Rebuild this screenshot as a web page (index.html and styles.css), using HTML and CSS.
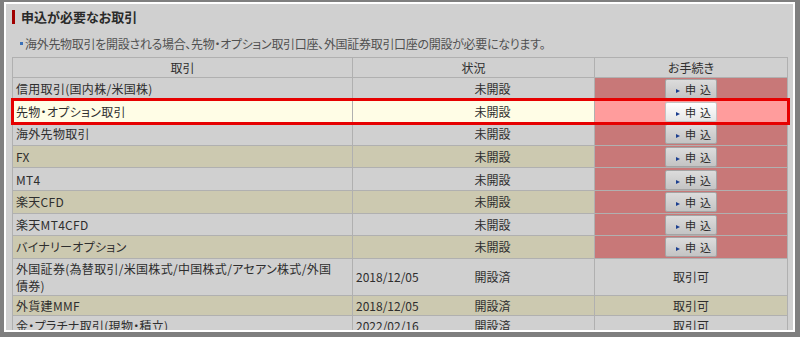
FILE: index.html
```html
<!DOCTYPE html>
<html lang="ja">

<head>
    <meta charset="UTF-8">
    <meta name="viewport" content="width=device-width, initial-scale=1.0">
    <title>申込が必要なお取引</title>
    <link rel="stylesheet" href="styles.css">
</head>

<body>
    <div class="screen">
        <div class="panel">
            <h2 class="ttl">申込が必要なお取引</h2>
            <p class="note">海外先物取引を開設される場合、先物・オプション取引口座、外国証券取引口座の開設が必要になります。</p>
            <table class="acct">
                <colgroup>
                    <col class="c-name">
                    <col class="c-date">
                    <col class="c-stat">
                    <col class="c-act">
                </colgroup>
                <tr>
                    <th>取引</th>
                    <th colspan="2">状況</th>
                    <th>お手続き</th>
                </tr>
                <tr class="apply">
                    <td>信用取引(国内株/米国株)</td>
                    <td class="date"></td>
                    <td class="stat">未開設</td>
                    <td class="act"><a class="btn" href="javascript:;">申込</a></td>
                </tr>
                <tr class="apply focus">
                    <td>先物・オプション取引</td>
                    <td class="date"></td>
                    <td class="stat">未開設</td>
                    <td class="act"><a class="btn" href="javascript:;">申込</a></td>
                </tr>
                <tr class="apply">
                    <td>海外先物取引</td>
                    <td class="date"></td>
                    <td class="stat">未開設</td>
                    <td class="act"><a class="btn" href="javascript:;">申込</a></td>
                </tr>
                <tr class="apply even">
                    <td>FX</td>
                    <td class="date"></td>
                    <td class="stat">未開設</td>
                    <td class="act"><a class="btn" href="javascript:;">申込</a></td>
                </tr>
                <tr class="apply">
                    <td>MT4</td>
                    <td class="date"></td>
                    <td class="stat">未開設</td>
                    <td class="act"><a class="btn" href="javascript:;">申込</a></td>
                </tr>
                <tr class="apply even">
                    <td>楽天CFD</td>
                    <td class="date"></td>
                    <td class="stat">未開設</td>
                    <td class="act"><a class="btn" href="javascript:;">申込</a></td>
                </tr>
                <tr class="apply">
                    <td>楽天MT4CFD</td>
                    <td class="date"></td>
                    <td class="stat">未開設</td>
                    <td class="act"><a class="btn" href="javascript:;">申込</a></td>
                </tr>
                <tr class="apply even">
                    <td>バイナリーオプション</td>
                    <td class="date"></td>
                    <td class="stat">未開設</td>
                    <td class="act"><a class="btn" href="javascript:;">申込</a></td>
                </tr>
                <tr>
                    <td>外国証券(為替取引/米国株式/中国株式/アセアン株式/外国債券)</td>
                    <td class="date">2018/12/05</td>
                    <td class="stat">開設済</td>
                    <td class="ok">取引可</td>
                </tr>
                <tr class="even">
                    <td>外貨建MMF</td>
                    <td class="date">2018/12/05</td>
                    <td class="stat">開設済</td>
                    <td class="ok">取引可</td>
                </tr>
                <tr>
                    <td>金・プラチナ取引(現物・積立)</td>
                    <td class="date">2022/02/16</td>
                    <td class="stat">開設済</td>
                    <td class="ok">取引可</td>
                </tr>
            </table>
        </div>
    </div>
</body>

</html>
```

FILE: styles.css
```css
* {
    box-sizing: border-box;
}
body {
    margin: 0;
    background: #7f7f7f;
    font-family: "Noto Sans CJK JP", "Liberation Sans", sans-serif;
    font-feature-settings: "palt";
    color: #2e2e2e;
}
.screen {
    padding: 2px 5px 5px 4px;
    height: 337px;
}
.panel {
    height: 330px;
    border: 2px solid #fff;
    background: #d0d0d0;
    padding: 6px 5px 0 6px;
    overflow: hidden;
}
.ttl {
    margin: 0;
    height: 14px;
    line-height: 14px;
    font-size: 13px;
    font-weight: bold;
    color: #2a2a2a;
    border-left: 3px solid #a00000;
    padding-left: 6px;
}
.note {
    margin: 13px 0 0;
    height: 14px;
    line-height: 14px;
    font-size: 12px;
    letter-spacing: -0.3px;
    color: #505050;
    padding-left: 13px;
    position: relative;
}
.note::before {
    content: "";
    position: absolute;
    left: 8px;
    top: 5px;
    width: 3px;
    height: 3px;
    background: #3a70b8;
}
.acct {
    margin-top: 6px;
    width: 776px;
    border-collapse: collapse;
    table-layout: fixed;
    font-size: 12px;
}
.c-name {
    width: 340px;
}
.c-date {
    width: 119px;
}
.c-stat {
    width: 123px;
}
.acct th,
.acct td {
    border: 1px solid #b0b0b0;
    padding: 1px 3px;
    line-height: 17px;
    font-weight: normal;
    text-align: left;
    vertical-align: middle;
}
.acct td:first-child {
    letter-spacing: 0.3px;
    padding-right: 18px;
}
.acct th {
    text-align: center;
}
.acct td.date {
    border-right: none;
}
.acct td.stat {
    border-left: none;
}
.acct td.act,
.acct td.ok {
    text-align: center;
}
.acct tr.even td {
    background: #ccc9b0;
}
.acct tr.apply td {
    height: 22.6px;
    padding-top: 0;
    padding-bottom: 0;
}
.acct tr.apply td.act {
    background: #c87878;
}
.btn {
    display: inline-block;
    vertical-align: middle;
    width: 52px;
    height: 20px;
    line-height: 18px;
    padding-left: 10px;
    text-align: left;
    white-space: nowrap;
    border: 1px solid #a4a4a4;
    border-radius: 2px;
    background: linear-gradient(#dcdcdc, #c4c4c4);
    color: #2a2a2a;
    font-size: 11px;
    text-decoration: none;
    letter-spacing: 4px;
}
.btn::before {
    content: "";
    display: inline-block;
    border-left: 4px solid #1c3f8f;
    border-top: 2.5px solid transparent;
    border-bottom: 2.5px solid transparent;
    margin-right: 5px;
    vertical-align: 1px;
}
.acct tr.focus {
    outline: 3px solid #e60000;
    outline-offset: -1px;
}
.acct tr.focus td {
    background: #fffde6;
}
.acct tr.focus td.act {
    background: #ff9c9c;
}
.acct tr.focus .btn {
    background: linear-gradient(#fff, #e6e6e6);
    border-color: #c4c4c4;
}
```
